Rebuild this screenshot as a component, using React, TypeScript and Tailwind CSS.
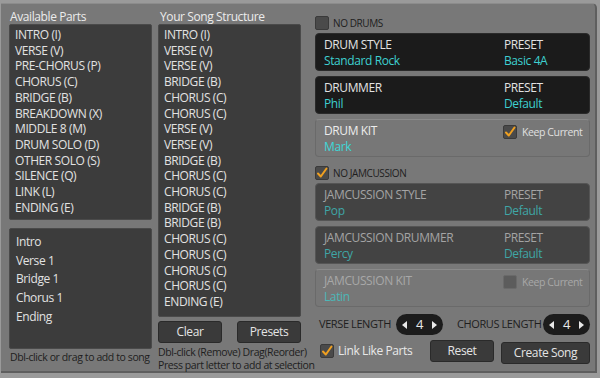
import React from 'react';

const available = [
  'INTRO (I)', 'VERSE (V)', 'PRE-CHORUS (P)', 'CHORUS (C)', 'BRIDGE (B)', 'BREAKDOWN (X)',
  'MIDDLE 8 (M)', 'DRUM SOLO (D)', 'OTHER SOLO (S)', 'SILENCE (Q)', 'LINK (L)', 'ENDING (E)',
];

const song = [
  'INTRO (I)', 'VERSE (V)', 'VERSE (V)', 'BRIDGE (B)', 'CHORUS (C)', 'CHORUS (C)', 'VERSE (V)',
  'VERSE (V)', 'BRIDGE (B)', 'CHORUS (C)', 'CHORUS (C)', 'BRIDGE (B)', 'BRIDGE (B)', 'CHORUS (C)',
  'CHORUS (C)', 'CHORUS (C)', 'CHORUS (C)', 'ENDING (E)',
];

const sections = ['Intro', 'Verse 1', 'Bridge 1', 'Chorus 1', 'Ending'];

const Check: React.FC<{ checked?: boolean; dim?: boolean }> = ({ checked, dim }) => (
  <div
    className={`w-[14px] h-[14px] shrink-0 rounded-[2px] border flex items-center justify-center ${
      dim ? 'bg-[#5c5c5c] border-[#6a6a6a]' : 'bg-[#4a4a4a] border-[#3a3a3a]'
    }`}
  >
    {checked && (
      <svg width="12" height="12" viewBox="0 0 12 12">
        <path d="M2 6.5 L4.8 9.5 L10.5 1.5" fill="none" stroke="#f0a020" strokeWidth="2" strokeLinecap="round" strokeLinejoin="round" />
      </svg>
    )}
  </div>
);

const Stepper: React.FC<{ value: number }> = ({ value }) => (
  <div className="w-[47px] h-[21px] shrink-0 rounded-full bg-[#1c1c1c] flex items-center justify-between px-[6px] text-[#e8e8e8]">
    <svg width="6" height="8" viewBox="0 0 6 8"><path d="M5 0 L0 4 L5 8 Z" fill="#e8e8e8" /></svg>
    <span className="text-[13px] leading-none">{value}</span>
    <svg width="6" height="8" viewBox="0 0 6 8"><path d="M1 0 L6 4 L1 8 Z" fill="#e8e8e8" /></svg>
  </div>
);

const Btn: React.FC<{ label: string; w: string }> = ({ label, w }) => (
  <button className={`${w} h-[22px] shrink-0 rounded-[3px] bg-[#3a3a3a] border border-[#2a2a2a] text-[#e4e4e4] text-[12px] leading-none whitespace-nowrap`}>
    {label}
  </button>
);

const PickBox: React.FC<{
  label: string; value: string; preset?: string; presetValue?: string; tone: 'black' | 'dark';
}> = ({ label, value, preset, presetValue, tone }) => {
  const muted = tone === 'dark';
  const head = muted ? 'text-[#a4a4a4]' : 'text-[#e2e2e2]';
  const val = muted ? 'text-[#3fa6a6]' : 'text-[#3ed0d0]';
  return (
    <div
      className={`h-[38px] rounded-[4px] pl-[8px] pt-[3px] flex whitespace-nowrap ${
        muted ? 'bg-[#434343] border border-[#555]' : 'bg-[#1b1b1b] border border-[#2a2a2a]'
      }`}
    >
      <div className="flex-1 flex flex-col">
        <span className={`text-[12px] leading-[16px] ${head}`}>{label}</span>
        <span className={`text-[12px] leading-[16px] ${val}`}>{value}</span>
      </div>
      {preset && (
        <div className="w-[85px] flex flex-col">
          <span className={`text-[12px] leading-[16px] ${head}`}>{preset}</span>
          <span className={`text-[12px] leading-[16px] ${val}`}>{presetValue}</span>
        </div>
      )}
    </div>
  );
};

const KitBox: React.FC<{ label: string; value: string; checked: boolean; muted?: boolean }> = ({ label, value, checked, muted }) => (
  <div className="h-[38px] rounded-[4px] bg-[#777] border border-[#6a6a6a] border-t-[#8a8a8a] pl-[8px] pt-[3px] flex whitespace-nowrap">
    <div className="flex-1 flex flex-col">
      <span className={`text-[12px] leading-[16px] ${muted ? 'text-[#a8a8a8]' : 'text-[#ececec]'}`}>{label}</span>
      <span className={`text-[12px] leading-[16px] ${muted ? 'text-[#4cb8b8]' : 'text-[#3ed8d8]'}`}>{value}</span>
    </div>
    <div className="w-[86px] flex items-center gap-[5px] h-[16px] mt-[1px]">
      <Check checked={checked} dim={muted} />
      <span className={`text-[10.5px] leading-[14px] ${muted ? 'text-[#a8a8a8]' : 'text-[#e0e0e0]'}`}>Keep Current</span>
    </div>
  </div>
);

export default function App() {
  return (
    <div
      className="w-[600px] h-[378px] bg-[#9a9a9a] overflow-hidden tracking-[-0.4px]"
      style={{ fontFamily: '"Open Sans", "Noto Sans", sans-serif' }}
    >
      <div className="ml-[1px] mt-[3px] w-[596px] h-[370px] bg-[#787878] rounded-tr-[5px] border-r-[2px] border-b-[2px] border-[#5e5e5e] border-t border-t-[#8c8c8c] flex pl-[8px] pt-[5px] gap-[6px]">
        {/* Left column */}
        <div className="w-[143px] flex flex-col">
          <div className="text-[12px] leading-[15px] text-[#ececec] pl-[1px] whitespace-nowrap">Available Parts</div>
          <div className="h-[196px] bg-[#3c3c3c] border border-[#4a4a4a] rounded-[2px] px-[5px] pt-[2px]">
            {available.map((a, i) => (
              <div key={i} className="text-[12px] leading-[15.7px] text-[#e2e2e2] whitespace-nowrap">{a}</div>
            ))}
          </div>
          <div className="h-[121px] mt-[8px] bg-[#3c3c3c] border border-[#4a4a4a] rounded-[2px] px-[6px] pt-[4px]">
            {sections.map((s, i) => (
              <div key={i} className="text-[12px] leading-[18.7px] text-[#e2e2e2]">{s}</div>
            ))}
          </div>
          <div className="text-[10.5px] leading-[14px] text-[#1e1e1e] mt-[1px] pl-[1px] whitespace-nowrap">Dbl-click or drag to add to song</div>
        </div>

        {/* Song column */}
        <div className="w-[143px] flex flex-col">
          <div className="text-[12px] leading-[15px] text-[#ececec] pl-[2px] whitespace-nowrap">Your Song Structure</div>
          <div className="h-[298px] bg-[#3c3c3c] border border-[#4a4a4a] rounded-[2px] px-[5px] pt-[2px]">
            {song.map((a, i) => (
              <div key={i} className="text-[12px] leading-[15.7px] text-[#e2e2e2] whitespace-nowrap">{a}</div>
            ))}
          </div>
          <div className="flex justify-between mt-[4px]">
            <Btn label="Clear" w="w-[64px]" />
            <Btn label="Presets" w="w-[64px]" />
          </div>
          <div className="text-[10.5px] leading-[12.5px] text-[#1e1e1e] mt-[3px] whitespace-nowrap">
            Dbl-click (Remove) Drag(Reorder)
            <br />
            Press part letter to add at selection
          </div>
        </div>

        {/* Right column */}
        <div className="w-[275px] flex flex-col ml-[8px]">
          <div className="flex items-center gap-[4px] h-[16px] mt-[6px] whitespace-nowrap">
            <Check />
            <span className="text-[10px] text-[#1e1e1e]">NO DRUMS</span>
          </div>
          <div className="mt-[2px] flex flex-col gap-[5px]">
            <PickBox tone="black" label="DRUM STYLE" value="Standard Rock" preset="PRESET" presetValue="Basic 4A" />
            <PickBox tone="black" label="DRUMMER" value="Phil" preset="PRESET" presetValue="Default" />
            <KitBox label="DRUM KIT" value="Mark" checked />
          </div>
          <div className="flex items-center gap-[4px] h-[16px] mt-[8px] whitespace-nowrap">
            <Check checked />
            <span className="text-[10px] text-[#1e1e1e]">NO JAMCUSSION</span>
          </div>
          <div className="mt-[2px] flex flex-col gap-[5px]">
            <PickBox tone="dark" label="JAMCUSSION STYLE" value="Pop" preset="PRESET" presetValue="Default" />
            <PickBox tone="dark" label="JAMCUSSION DRUMMER" value="Percy" preset="PRESET" presetValue="Default" />
            <KitBox label="JAMCUSSION KIT" value="Latin" checked={false} muted />
          </div>
          <div className="flex items-center mt-[7px] h-[21px] whitespace-nowrap">
            <span className="text-[11px] text-[#1e1e1e] w-[81px] pl-[4px]">VERSE LENGTH</span>
            <Stepper value={4} />
            <span className="text-[11px] text-[#1e1e1e] ml-[14px] w-[86px]">CHORUS LENGTH</span>
            <Stepper value={4} />
          </div>
          <div className="flex items-center mt-[5px] h-[22px] whitespace-nowrap">
            <div className="flex items-center gap-[4px] w-[118px] pl-[5px]">
              <Check checked />
              <span className="text-[12px] text-[#e8e8e8]">Link Like Parts</span>
            </div>
            <Btn label="Reset" w="w-[64px]" />
            <div className="ml-[7px]"><Btn label="Create Song" w="w-[89px]" /></div>
          </div>
        </div>
      </div>
    </div>
  );
}
